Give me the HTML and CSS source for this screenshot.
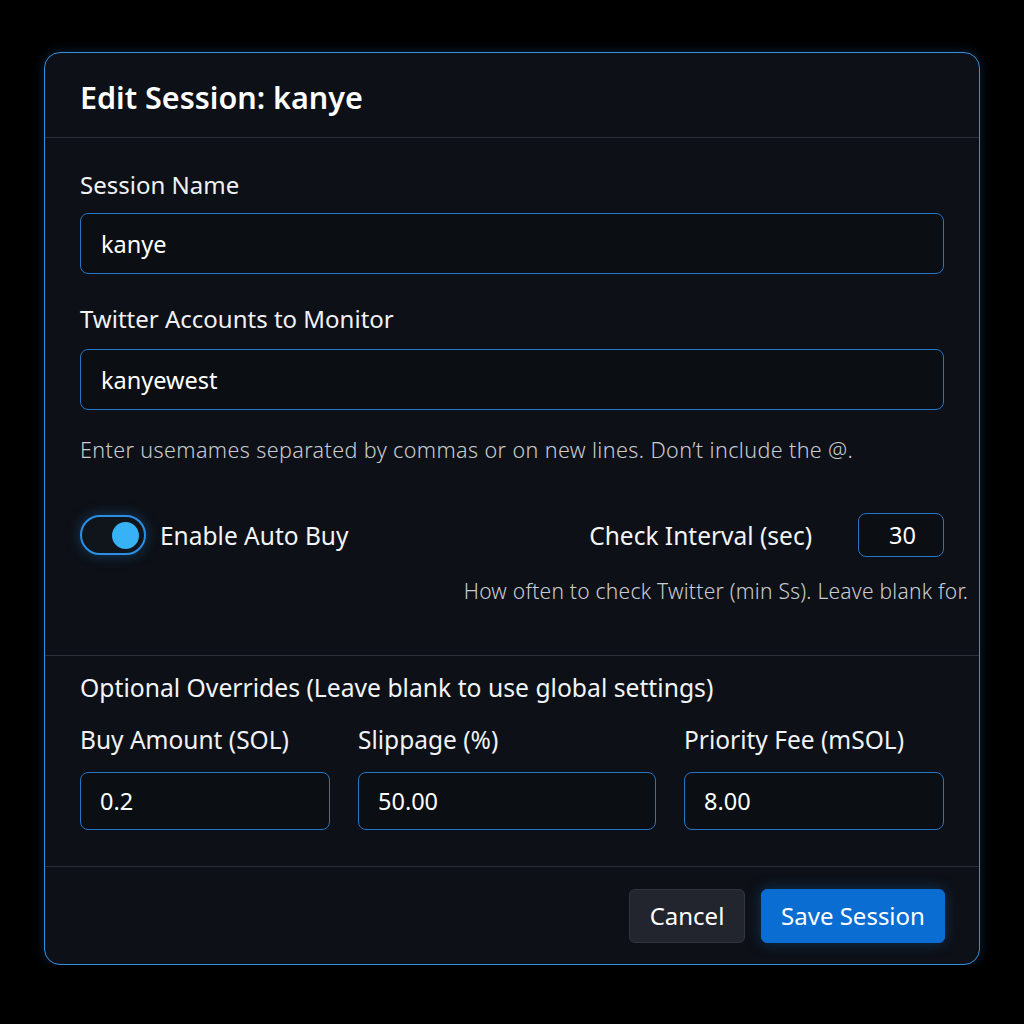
FILE: index.html
```html
<!DOCTYPE html>
<html lang="en">
<head>
    <meta charset="UTF-8">
    <meta name="viewport" content="width=device-width, initial-scale=1.0">
    <title>Edit Session</title>
    <link rel="stylesheet" href="styles.css">
</head>
<body>
    <div class="modal">
        <div class="modal-header">
            <h2>Edit Session: kanye</h2>
        </div>

        <div class="modal-body">
            <label class="field-label">Session Name</label>
            <div class="input input-wide">kanye</div>

            <label class="field-label second">Twitter Accounts to Monitor</label>
            <div class="input input-wide">kanyewest</div>
            <p class="hint">Enter usemames separated by commas or on new lines. Don’t include the @.</p>

            <div class="options-row">
                <div class="toggle-group">
                    <span class="toggle"><span class="knob"></span></span>
                    <span class="toggle-label">Enable Auto Buy</span>
                </div>
                <div class="interval-group">
                    <span class="interval-label">Check Interval (sec)</span>
                    <div class="input input-small">30</div>
                </div>
            </div>
            <p class="hint hint-right">How often to check Twitter (min Ss). Leave blank for.</p>
        </div>

        <div class="overrides">
            <div class="overrides-title">Optional Overrides (Leave blank to use global settings)</div>
            <div class="overrides-grid">
                <div class="col">
                    <label class="field-label">Buy Amount (SOL)</label>
                    <div class="input input-mid">0.2</div>
                </div>
                <div class="col">
                    <label class="field-label">Slippage (%)</label>
                    <div class="input input-mid">50.00</div>
                </div>
                <div class="col">
                    <label class="field-label">Priority Fee (mSOL)</label>
                    <div class="input input-mid">8.00</div>
                </div>
            </div>
        </div>

        <div class="modal-footer">
            <button class="btn btn-cancel">Cancel</button>
            <button class="btn btn-save">Save Session</button>
        </div>
    </div>
</body>
</html>
```

FILE: styles.css
```css
body {
    margin: 0;
    background-color: #000;
    font-family: "Noto Sans", "Open Sans", sans-serif;
    color: #f2f4f7;
}

.modal {
    margin: 52px 0 0 44px;
    width: 934px;
    height: 911px;
    background-color: #0d1016;
    border: 1px solid #3190e0;
    border-radius: 16px;
    box-shadow: 0 0 12px rgba(40, 130, 220, 0.25);
    display: flex;
    flex-direction: column;
}

.modal-header {
    height: 84px;
    padding: 0 35px;
    display: flex;
    align-items: center;
    border-bottom: 1px solid #2c3038;
}

.modal-header h2 {
    margin: 4px 0 0 0;
    font-size: 30.5px;
    font-weight: 600;
    color: #fff;
}

.modal-body {
    padding: 32px 35px 51px 35px;
    border-bottom: 1px solid #2c3038;
}

.field-label {
    display: block;
    font-size: 24px;
    line-height: 30px;
    color: #f0f2f5;
}

.field-label.second {
    margin-top: 30px;
}

.input {
    box-sizing: border-box;
    border: 1.5px solid #2775c6;
    border-radius: 8px;
    background-color: #0b0e13;
    color: #fff;
    font-size: 23.5px;
    display: flex;
    align-items: center;
}

.input-wide {
    margin-top: 13px;
    height: 61px;
    padding-left: 20px;
}

.second + .input-wide {
    margin-top: 15px;
}

.hint {
    margin: 27px 0 0 0;
    font-size: 21.5px;
    font-weight: 300;
    letter-spacing: 0.4px;
    line-height: 26px;
    color: #c9ccd2;
}

.options-row {
    margin-top: 50px;
    height: 44px;
    display: flex;
    align-items: center;
    justify-content: space-between;
}

.toggle-group {
    display: flex;
    align-items: center;
    gap: 14px;
}

.toggle {
    box-sizing: border-box;
    width: 66px;
    height: 40px;
    border: 2px solid #2c8fe6;
    border-radius: 20px;
    background-color: #10141b;
    display: flex;
    align-items: center;
    justify-content: flex-end;
    padding-right: 5px;
    box-shadow: 0 0 14px rgba(40, 140, 230, 0.35);
}

.knob {
    width: 27px;
    height: 27px;
    border-radius: 50%;
    background-color: #38b2f6;
}

.toggle-label {
    font-size: 24.5px;
    color: #f2f4f7;
}

.interval-group {
    display: flex;
    align-items: center;
    gap: 46px;
}

.interval-label {
    font-size: 24.5px;
}

.input-small {
    width: 86px;
    height: 44px;
    justify-content: center;
    padding-left: 3px;
}

.hint-right {
    margin: 21px -24px 0 0;
    font-size: 21px;
    letter-spacing: 0.25px;
    text-align: right;
}

.overrides {
    padding: 17px 35px 36px 35px;
    border-bottom: 1px solid #2c3038;
}

.overrides-title {
    font-size: 24.7px;
    line-height: 30px;
}

.overrides-grid {
    margin-top: 22px;
    display: grid;
    grid-template-columns: 250px 298px 1fr;
    column-gap: 28px;
}

.overrides-grid .field-label {
    font-size: 24.5px;
}

.input-mid {
    margin-top: 17px;
    height: 58px;
    padding-left: 19px;
}

.modal-footer {
    flex: 1;
    display: flex;
    justify-content: flex-end;
    align-items: center;
    gap: 16px;
    padding: 0 34px;
}

.btn {
    height: 54px;
    border-radius: 6px;
    font-family: inherit;
    font-size: 24px;
    color: #fff;
}

.btn-cancel {
    width: 116px;
    background-color: #22252d;
    border: 1px solid #30343c;
}

.btn-save {
    width: 184px;
    background-color: #0a6dd2;
    border: 1px solid #0a6dd2;
    box-shadow: 0 0 14px rgba(20, 120, 220, 0.35);
}
```
